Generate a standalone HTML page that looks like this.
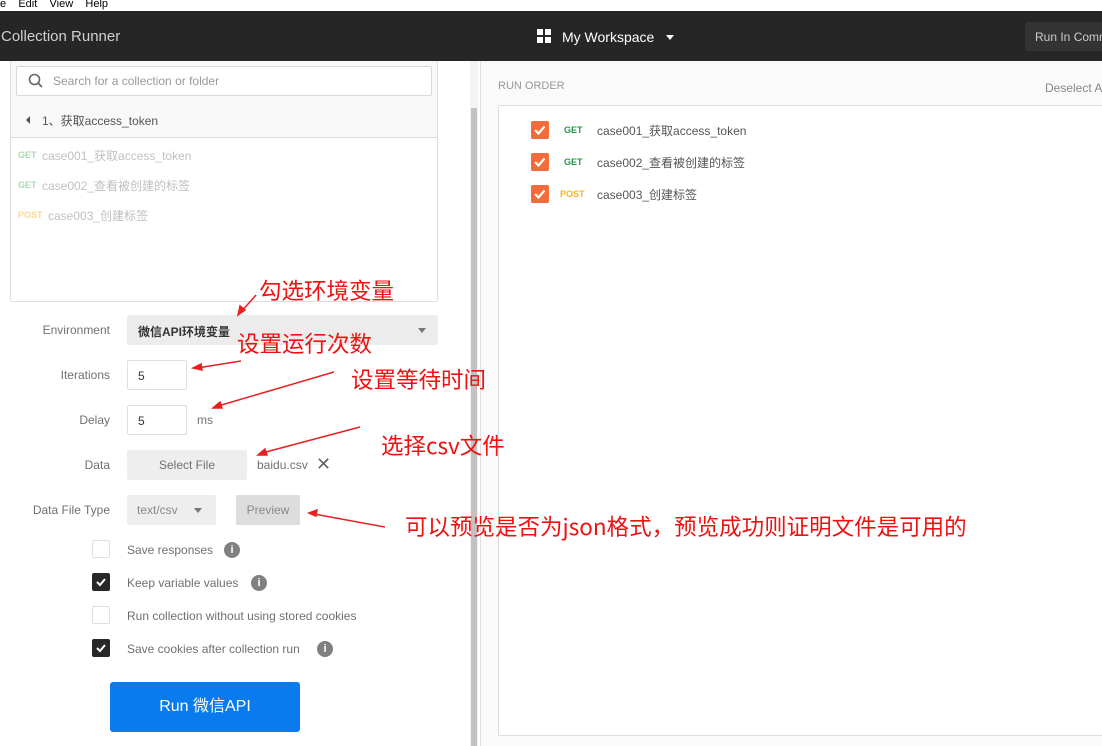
<!DOCTYPE html>
<html><head><meta charset="utf-8"><style>
*{box-sizing:border-box;margin:0;padding:0}
body{width:1102px;height:746px;overflow:hidden;background:#fff;font-family:"Liberation Sans","Noto Sans CJK SC",sans-serif;position:relative;color:#505050}
.a{position:absolute}
.lbl{position:absolute;font-size:12px;color:#707070;text-align:right;width:110px;left:0}
.red{position:absolute;color:#f01010;font-size:22.5px;font-family:"Noto Sans CJK SC",sans-serif;white-space:nowrap;line-height:1}
.cb{position:absolute;width:18px;height:18px;border:1px solid #e0e0e0;border-radius:2px;background:#fff}
.cb.on{background:#282828;border-color:#282828}
.cbt{position:absolute;font-size:12px;color:#707070}
.info{position:absolute;width:16px;height:16px;border-radius:50%;background:#808080;color:#fff;font-size:11px;font-weight:bold;text-align:center;line-height:16px}
.oc{position:absolute;left:531px;width:18px;height:18px;background:#f26b3a;border-radius:2px}
</style></head><body>
<div class="a" style="left:0;top:0;width:1102px;height:11px;background:#fff;font-size:11px;color:#000;line-height:8px;overflow:hidden">e&nbsp;&nbsp;&nbsp;&nbsp;Edit&nbsp;&nbsp;&nbsp;&nbsp;View&nbsp;&nbsp;&nbsp;&nbsp;Help</div>
<div class="a" style="left:0;top:11px;width:1102px;height:50px;background:#262626"></div>
<div class="a" style="left:1px;top:28px;color:#d0d0d0;font-size:15px">Collection Runner</div>
<svg class="a" style="left:537px;top:29px" width="14" height="14"><rect x="0" y="0" width="6" height="6" fill="#fff"/><rect x="8" y="0" width="6" height="6" fill="#fff"/><rect x="0" y="8" width="6" height="6" fill="#fff"/><rect x="8" y="8" width="6" height="6" fill="#fff"/></svg>
<div class="a" style="left:562px;top:29px;color:#fff;font-size:14px">My Workspace</div>
<div class="a" style="left:666px;top:35px;border:4px solid transparent;border-top:5px solid #fff"></div>
<div class="a" style="left:1025px;top:22px;width:80px;height:29px;background:#333;border-radius:3px;color:#ccc;font-size:12px;padding:8px 0 0 10px;white-space:nowrap">Run In Comm</div>
<div class="a" style="left:10px;top:61px;width:428px;height:241px;border:1px solid #ddd;border-top:none;border-radius:0 0 3px 3px"></div>
<div class="a" style="left:11px;top:61px;width:426px;height:77px;background:#f8f8f8;border-bottom:1px solid #ddd"></div>
<div class="a" style="left:16px;top:66px;width:416px;height:30px;border:1px solid #d8d8d8;background:#fff;border-radius:2px"></div>
<svg class="a" style="left:28px;top:73px" width="16" height="16"><circle cx="6.5" cy="6.5" r="5" fill="none" stroke="#666" stroke-width="1.6"/><line x1="10" y1="10" x2="14" y2="14" stroke="#666" stroke-width="1.8"/></svg>
<div class="a" style="left:53px;top:74px;font-size:12px;color:#999">Search for a collection or folder</div>
<div class="a" style="left:26px;top:116px;border:4px solid transparent;border-right:4px solid #555;border-left:none"></div>
<div class="a" style="left:42px;top:112px;font-size:12px;color:#555">1、获取access_token</div>
<div class="a" style="left:18px;top:150px;font-size:9px;color:#a8d8b0;font-weight:bold">GET</div>
<div class="a" style="left:42px;top:147px;font-size:12px;color:#c0c0c0">case001_获取access_token</div>
<div class="a" style="left:18px;top:180px;font-size:9px;color:#a8d8b0;font-weight:bold">GET</div>
<div class="a" style="left:42px;top:177px;font-size:12px;color:#c0c0c0">case002_查看被创建的标签</div>
<div class="a" style="left:18px;top:210px;font-size:9px;color:#ffd88a;font-weight:bold">POST</div>
<div class="a" style="left:48px;top:207px;font-size:12px;color:#c0c0c0">case003_创建标签</div>
<div class="a" style="left:470px;top:61px;width:8px;height:685px;background:#f4f4f4"></div>
<div class="a" style="left:471px;top:108px;width:6px;height:638px;background:#c2c2c2"></div>
<div class="a" style="left:480px;top:61px;width:1px;height:685px;background:#e0e0e0"></div>
<div class="lbl" style="top:323px">Environment</div>
<div class="a" style="left:127px;top:315px;width:311px;height:30px;background:#ececec;border-radius:2px;font-size:12px;color:#333;padding:8px 11px;font-weight:bold">微信API环境变量</div>
<div class="a" style="left:418px;top:328px;border:4px solid transparent;border-top:5px solid #777"></div>
<div class="lbl" style="top:368px">Iterations</div>
<div class="a" style="left:127px;top:360px;width:60px;height:30px;border:1px solid #e0e0e0;border-radius:2px;font-size:12px;padding:8px 10px;color:#333">5</div>
<div class="lbl" style="top:413px">Delay</div>
<div class="a" style="left:127px;top:405px;width:60px;height:30px;border:1px solid #e0e0e0;border-radius:2px;font-size:12px;padding:8px 10px;color:#333">5</div>
<div class="a" style="left:197px;top:413px;font-size:12px;color:#707070">ms</div>
<div class="lbl" style="top:458px">Data</div>
<div class="a" style="left:127px;top:450px;width:120px;height:30px;background:#eee;border-radius:2px;font-size:12px;text-align:center;line-height:30px;color:#707070">Select File</div>
<div class="a" style="left:257px;top:458px;font-size:12px;color:#707070">baidu.csv</div>
<div class="a" style="left:316px;top:454px;font-size:18px;color:#666">✕</div>
<div class="lbl" style="top:503px">Data File Type</div>
<div class="a" style="left:127px;top:495px;width:89px;height:30px;background:#eee;border-radius:2px;font-size:12px;padding:8px 10px;color:#888">text/csv</div>
<div class="a" style="left:194px;top:508px;border:4px solid transparent;border-top:5px solid #777"></div>
<div class="a" style="left:236px;top:495px;width:64px;height:30px;background:#ddd;border-radius:2px;font-size:12px;text-align:center;line-height:30px;color:#888">Preview</div>
<div class="cb" style="left:92px;top:540px"></div><div class="cbt" style="left:127px;top:543px">Save responses</div><div class="info" style="left:224px;top:542px">i</div>
<div class="cb on" style="left:92px;top:573px"></div><svg class="a" style="left:95px;top:576px" width="12" height="12"><path d="M2 6l3 3 5-6" stroke="#fff" stroke-width="2" fill="none"/></svg><div class="cbt" style="left:127px;top:576px">Keep variable values</div><div class="info" style="left:251px;top:575px">i</div>
<div class="cb" style="left:92px;top:606px"></div><div class="cbt" style="left:127px;top:609px">Run collection without using stored cookies</div>
<div class="cb on" style="left:92px;top:639px"></div><svg class="a" style="left:95px;top:642px" width="12" height="12"><path d="M2 6l3 3 5-6" stroke="#fff" stroke-width="2" fill="none"/></svg><div class="cbt" style="left:127px;top:642px">Save cookies after collection run</div><div class="info" style="left:317px;top:641px">i</div>
<div class="a" style="left:110px;top:682px;width:190px;height:50px;background:#097bed;border-radius:3px;color:#fff;font-size:16px;text-align:center;line-height:50px">Run 微信API</div>
<div class="a" style="left:481px;top:61px;width:621px;height:685px;background:#fafafa"></div>
<div class="a" style="left:498px;top:80px;font-size:11px;color:#999">RUN ORDER</div>
<div class="a" style="left:1045px;top:81px;font-size:12px;color:#888;white-space:nowrap">Deselect A</div>
<div class="a" style="left:498px;top:105px;width:610px;height:631px;background:#fff;border:1px solid #ddd;border-radius:2px"></div>
<div class="oc" style="top:121px"></div><div class="oc" style="top:153px"></div><div class="oc" style="top:185px"></div>
<svg class="a" style="left:531px;top:121px" width="18" height="82"><path d="M4 9l3.5 3.5 6-7M4 41l3.5 3.5 6-7M4 73l3.5 3.5 6-7" stroke="#fff" stroke-width="2.2" fill="none"/></svg>
<div class="a" style="left:564px;top:125px;font-size:9px;color:#1f9a4a;font-weight:bold">GET</div>
<div class="a" style="left:597px;top:122px;font-size:12px;color:#555">case001_获取access_token</div>
<div class="a" style="left:564px;top:157px;font-size:9px;color:#1f9a4a;font-weight:bold">GET</div>
<div class="a" style="left:597px;top:154px;font-size:12px;color:#555">case002_查看被创建的标签</div>
<div class="a" style="left:560px;top:189px;font-size:9px;color:#fbb515;font-weight:bold">POST</div>
<div class="a" style="left:597px;top:186px;font-size:12px;color:#555">case003_创建标签</div>
<div class="red" style="left:259px;top:279px">勾选环境变量</div>
<div class="red" style="left:237px;top:332px">设置运行次数</div>
<div class="red" style="left:351px;top:368px">设置等待时间</div>
<div class="red" style="left:381px;top:434px">选择csv文件</div>
<div class="red" style="left:405px;top:515px">可以预览是否为json格式，预览成功则证明文件是可用的</div>
<svg class="a" style="left:0;top:0" width="1102" height="746"><g stroke="#e82020" stroke-width="1.5" fill="#e82020">
<line x1="256" y1="295" x2="241" y2="312"/><path d="M238 315l2-9 5 4z"/>
<line x1="241" y1="361" x2="197" y2="368"/><path d="M193 368l8-4 1 6z"/>
<line x1="334" y1="372" x2="218" y2="406"/><path d="M213 408l7-6 2 6z"/>
<line x1="360" y1="427" x2="262" y2="453"/><path d="M258 455l7-6 2 6z"/>
<line x1="385" y1="527" x2="314" y2="514"/><path d="M309 513l8-3 -1 6z"/>
</g></svg>
</body></html>
